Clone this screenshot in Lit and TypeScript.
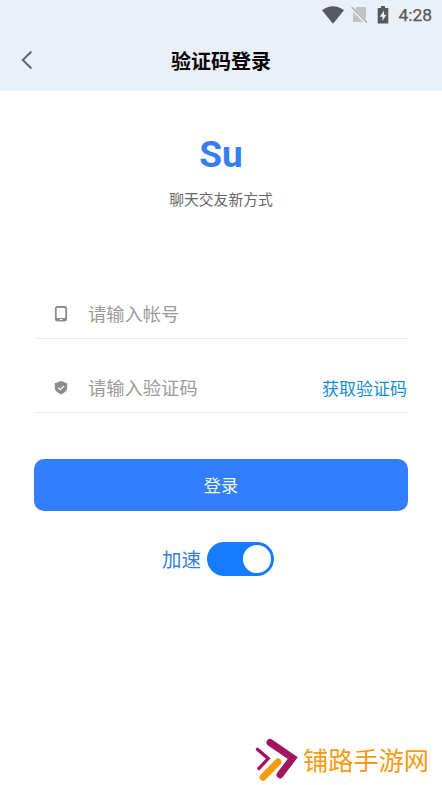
import { LitElement, html, css } from "lit";
import { customElement, state } from "lit/decorators.js";

@customElement("app-root")
export class AppRoot extends LitElement {
  @state() private boost = true;

  static styles = css`
    :host {
      display: flex;
      flex-direction: column;
      box-sizing: border-box;
      width: 100%;
      height: 785px;
      overflow: hidden;
      background: #fff;
      font-family: Roboto, "Noto Sans CJK SC", sans-serif;
    }
    svg { display: block; flex: none; }
    .top { background: #ebeff7; height: 91px; flex: none; }
    .status {
      height: 30px;
      display: flex;
      align-items: center;
      justify-content: flex-end;
      padding-right: 10px;
      box-sizing: border-box;
      color: #56595d;
    }
    .signal { margin-left: 7px; }
    .battery { margin-left: 9px; }
    .time { font-size: 17.4px; line-height: 30px; margin-left: 9px; -webkit-text-stroke: 0.25px #56595d; }
    .nav {
      display: grid;
      grid-template-columns: 60px 1fr 60px;
      align-items: center;
      height: 60px;
    }
    .back { margin-left: 20px; }
    .title { text-align: center; font-size: 20px; line-height: 30px; padding-top: 3px; font-weight: 700; color: #050507; }
    .brand { text-align: center; padding-top: 44px; }
    .logo { font-size: 37px; line-height: 40px; font-weight: 700; color: #377ff0; }
    .slogan { font-size: 14.8px; line-height: 22px; margin-top: 14px; color: #666; }
    .form { margin: 78px 34px 0; }
    .row {
      display: flex;
      align-items: center;
      height: 49px;
      border-bottom: 1px solid #eee;
      padding-left: 20px;
    }
    .row + .row { margin-top: 24px; }
    .hint { flex: 1; margin-left: 20px; padding-top: 2px; font-size: 18.3px; line-height: 28px; color: #9b9b9b; }
    .code { font-size: 17px; line-height: 28px; padding: 2px 1px 0 0; color: #138fcf; }
    .login {
      display: flex;
      align-items: center;
      justify-content: center;
      height: 52px;
      box-sizing: border-box;
      padding-bottom: 2px;
      margin: 46px 34px 0;
      border-radius: 10px;
      background: #337eff;
      color: #eef7ff;
      font-size: 17.2px;
    }
    .boost {
      display: flex;
      align-items: center;
      justify-content: center;
      margin: 31px 6px 0 0;
      gap: 6px;
      font-size: 19.5px;
      line-height: 34px;
      color: #377fdd;
    }
    .boost-label { padding-top: 3px; line-height: 31px; }
    .switch {
      width: 67px;
      height: 34px;
      border-radius: 17px;
      box-sizing: border-box;
      padding: 3px;
      display: flex;
      background: #bbb;
    }
    .switch.on { background: #157bff; justify-content: flex-end; }
    .knob { width: 28px; height: 28px; border-radius: 50%; background: #fff; }
    .mark {
      margin-top: auto;
      display: flex;
      align-items: center;
      justify-content: flex-end;
      height: 50px;
      padding-right: 13px;
      color: #f69b12;
      font-size: 25.2px;
      line-height: 36px;
      gap: 4px;
    }
    .mark-name { padding-top: 3px; }
  `;

  render() {
    return html`
      <header class="top">
        <div class="status">
          <svg width="22" height="18" viewBox="0 0 22 18"><path d="M0 4.2Q11-3.6 22 4.2L11 17.7Z" fill="#56595d"/></svg>
          <svg class="signal" width="17" height="18" viewBox="0 0 17 18">
            <path d="M6 1H15V16H2V5Z" fill="#bfc3c8"/>
            <path d="M.7 2.2L15.5 17" stroke="#ebeff7" stroke-width="3.4"/>
            <path d="M.7 1.2L16 16.5" stroke="#a9adb3" stroke-width="1.4"/>
          </svg>
          <svg class="battery" width="12" height="18" viewBox="0 0 12 18">
            <path d="M4 0H8V2H11.3V17.5H.7V2H4Z" fill="#56595d"/>
            <path d="M7 4.5L2.8 10.7H5.5V15L9.4 8.8H7Z" fill="#ebeff7"/>
          </svg>
          <span class="time">4:28</span>
        </div>
        <nav class="nav">
          <svg class="back" width="14" height="20" viewBox="0 0 14 20"><path d="M11.3 1.5L2.8 10L11.3 18.5" fill="none" stroke="#5c6066" stroke-width="1.8"/></svg>
          <div class="title">验证码登录</div>
        </nav>
      </header>
      <section class="brand">
        <div class="logo">Su</div>
        <div class="slogan">聊天交友新方式</div>
      </section>
      <section class="form">
        <div class="row">
          <svg width="14" height="16" viewBox="0 0 14 16">
            <rect x="1.8" y="1" width="10.4" height="13.6" rx="1.5" fill="none" stroke="#8c8c8c" stroke-width="1.8"/>
            <path d="M1.8 12H12.2V15H1.8Z" fill="#8c8c8c"/><path d="M5.8 13.5H8.4" stroke="#fff" stroke-width="1"/>
          </svg>
          <span class="hint">请输入帐号</span>
        </div>
        <div class="row">
          <svg width="14" height="16" viewBox="0 0 14 16">
            <path d="M7 .9L13.2 3.2V8Q13 12 7 14.4Q1 12 .8 8V3.2Z" fill="#8c8c8c"/>
            <path d="M4.2 7.6L6.3 9.6L10 5.8" fill="none" stroke="#fff" stroke-width="1.2"/>
          </svg>
          <span class="hint">请输入验证码</span>
          <span class="code">获取验证码</span>
        </div>
      </section>
      <div class="login">登录</div>
      <div class="boost">
        <span class="boost-label">加速</span>
        <div class="switch ${this.boost ? "on" : ""}" @click=${() => (this.boost = !this.boost)}><div class="knob"></div></div>
      </div>
      <footer class="mark">
        <svg width="46" height="46" viewBox="253 737 46 46" fill="none">
          <path d="M257.4 749.3L268.2 758.5L258.8 768.6" stroke="#a3145f" stroke-width="3.3" stroke-linecap="round"/>
          <path d="M270 742.5L292.8 758L280 774.8" stroke="#a3145f" stroke-width="7" stroke-linecap="round"/>
          <path d="M278.2 762L263.2 777.3" stroke="#fff" stroke-width="9"/>
          <path d="M278 762L263 777.3" stroke="#f69b12" stroke-width="7" stroke-linecap="round"/>
        </svg>
        <span class="mark-name">铺路手游网</span>
      </footer>
    `;
  }
}
